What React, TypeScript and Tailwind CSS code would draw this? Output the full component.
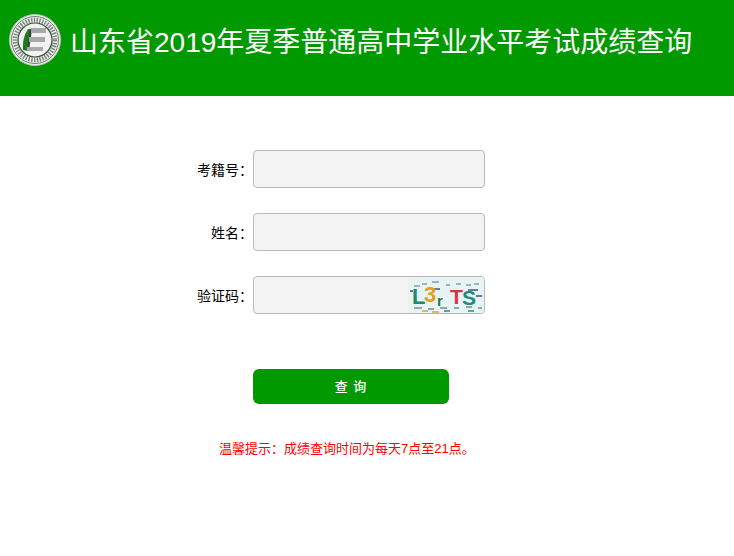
import React from 'react';

const FONT = "font-['Liberation_Sans','Noto_Sans_CJK_SC',sans-serif]";

const Logo: React.FC = () => (
  <svg width="52" height="52" viewBox="0 0 52 52" className="shrink-0">
    <circle cx="26" cy="26" r="25.5" fill="#f4f4f4" stroke="#b5c8b5" strokeWidth="1" />
    <circle cx="26" cy="26" r="23.5" fill="none" stroke="#4c5a4c" strokeWidth="0.8" />
    <circle cx="26" cy="26" r="20" fill="none" stroke="#5c6a5c" strokeWidth="4.5" strokeDasharray="1.5 1.3" opacity="0.8" />
    <circle cx="26" cy="26" r="17" fill="#f2f2f2" stroke="#2f4a2f" strokeWidth="1.2" />
    <path d="M19 15 L22 15 L19 37 L14 36 Q13 24 19 15Z" fill="#1f7a1f" />
    <path d="M21 15 L23 15 L20 37 L18 37Z" fill="#3a3a3a" />
    <rect x="22" y="14" width="15" height="5" fill="#a8a8a8" />
    <rect x="20" y="23" width="16" height="5" fill="#a8a8a8" />
    <rect x="18" y="33" width="16" height="4" fill="#a8a8a8" />
  </svg>
);

const Captcha: React.FC = () => (
  <svg width="76" height="36" viewBox="0 0 76 36" className="block">
    <rect width="76" height="36" fill="#e8f3f3" />
    <g strokeWidth="1.5">
      <path d="M6 9h6M14 7h5M24 5h7M38 8h4M48 7h5M58 8h5M66 7h5" stroke="#7fa0b8" />
      <path d="M2 14h3M24 12h8M60 13h10M68 19h6" stroke="#3c5a78" />
      <path d="M6 31h8M20 32h6M32 31h7M46 31h5M58 30h6M70 31h4" stroke="#6f8f9a" />
      <path d="M14 34h6M24 35h7" stroke="#d8a92c" />
      <path d="M36 34h6M60 34h6" stroke="#2f8f7f" />
    </g>
    <g fontFamily="Liberation Sans" fontWeight="700">
      <text x="4" y="27" fontSize="22" fill="#1f8a6f">L</text>
      <text x="16" y="25" fontSize="22" fill="#e0a020">3</text>
      <text x="29" y="29" fontSize="15" fill="#1f7a3f">r</text>
      <text x="42" y="27" fontSize="21" fill="#d8304a">T</text>
      <text x="54" y="28" fontSize="21" fill="#1f8a7f">S</text>
    </g>
  </svg>
);

const fields = [
  { label: '考籍号：', captcha: false },
  { label: '姓名：', captcha: false },
  { label: '验证码：', captcha: true },
];

const App: React.FC = () => {
  return (
    <div className={`min-h-[556px] bg-white ${FONT}`}>
      {/* Header */}
      <div className="flex h-24 items-start gap-[9px] bg-[#009900] pl-[9px] pt-[14px]">
        <Logo />
        <h1 className="pt-[9px] text-[28px] leading-[40px] font-normal whitespace-nowrap text-white">
          山东省2019年夏季普通高中学业水平考试成绩查询
        </h1>
      </div>

      {/* Form */}
      <div className="flex flex-col gap-[25px] pt-[54px]">
        {fields.map(field => (
          <div key={field.label} className="flex items-center pl-[120px]">
            <label className="w-[133px] pt-[2px] text-right text-sm text-black">{field.label}</label>
            <div className="relative h-[38px] w-[232px]">
              <input
                type="text"
                className="h-full w-full rounded-[4px] border border-[#b9b9b9] bg-[#f3f3f3]"
              />
              {field.captcha && (
                <div className="absolute top-px right-px overflow-hidden rounded-r-[3px]">
                  <Captcha />
                </div>
              )}
            </div>
          </div>
        ))}
      </div>

      <div className="pt-[55px] pl-[253px]">
        <button className="h-[35px] w-[196px] rounded-[6px] bg-[#009900] text-[13px] font-medium tracking-[1px] text-white">
          查 询
        </button>
      </div>

      <p className="pt-[36px] pl-[219px] text-[13px] leading-[18px] whitespace-nowrap text-[#ff0000]">
        温馨提示：成绩查询时间为每天7点至21点。
      </p>
    </div>
  );
};

export default App;
